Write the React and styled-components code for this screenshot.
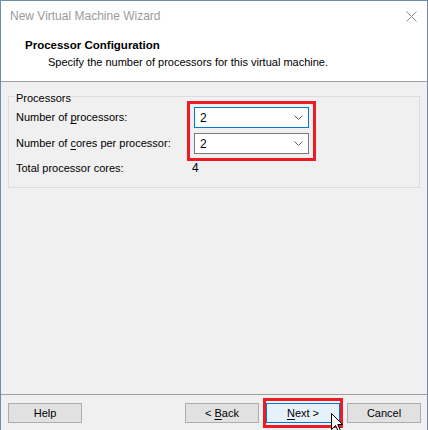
import styled, { createGlobalStyle } from 'styled-components';

const GlobalStyle = createGlobalStyle`
  html, body {
    margin: 0;
    padding: 0;
    background: #ffffff;
  }
  body {
    font-family: 'Liberation Sans', Arial, sans-serif;
    font-size: 11px;
    color: #000000;
  }
  * {
    box-sizing: border-box;
  }
`;

const Window = styled.div`
  position: relative;
  width: 428px;
  height: 430px;
  border: 1px solid #6c8db0;
  border-bottom: none;
  background: #f0f0f0;
  display: flex;
  flex-direction: column;
  overflow: hidden;
`;

const TitleBar = styled.div`
  height: 30px;
  background: #ffffff;
  display: flex;
  align-items: center;
  justify-content: space-between;
  padding: 0 10px 0 9px;
`;

const Title = styled.span`
  color: #9a9a9a;
  font-size: 12px;
`;

const Header = styled.div`
  height: 51px;
  background: #ffffff;
  border-bottom: 1px solid #a0a0a0;
  padding: 6px 0 0 24px;
`;

const HeaderTitle = styled.div`
  font-weight: bold;
  font-size: 11.5px;
  line-height: 16px;
`;

const HeaderText = styled.div`
  line-height: 16px;
  margin: 1px 0 0 23px;
`;

const Body = styled.div`
  flex: 1;
  padding: 7px 7px 0 7px;
`;

const Group = styled.fieldset`
  margin: 0;
  padding: 0 7px 10px 7px;
  border: 1px solid #dcdcdc;
`;

const Legend = styled.legend`
  padding: 4px 1px 0 1px;
  margin-left: -1px;
  line-height: 10px;
`;

const Grid = styled.div`
  display: grid;
  grid-template-columns: 178px 115px;
  grid-template-rows: 21px 21px 18px;
  row-gap: 5px;
  padding-top: 4px;
  align-items: center;
`;

const Label = styled.div`
  line-height: 15px;
`;

const Key = styled.span`
  text-decoration: underline;
  text-underline-offset: 2px;
`;

const Highlight = styled.div`
  position: relative;
  grid-column: 2;
  grid-row: 1 / span 2;
  display: flex;
  flex-direction: column;
  gap: 5px;
  align-self: stretch;

  &::after {
    content: '';
    position: absolute;
    top: -6px;
    left: -7px;
    right: -7px;
    bottom: -7px;
    border: 3px solid #ed1c24;
    pointer-events: none;
  }
`;

const Select = styled.div`
  height: 21px;
  background: #ffffff;
  border: 1px solid ${p => (p.$focused ? '#0078d7' : '#7a7a7a')};
  display: flex;
  align-items: center;
  justify-content: space-between;
  padding: 0 5px 0 5px;
  font-size: 12px;
`;

const Value = styled.div`
  margin-left: -2px;
  line-height: 15px;
  font-size: 12px;
`;

const Footer = styled.div`
  border-top: 1px solid #a0a0a0;
  height: 36px;
  padding: 8px 6px 0 7px;
  display: flex;
  gap: 7px;
`;

const Spacer = styled.div`
  flex: 1;
`;

const Button = styled.div`
  position: relative;
  width: 74px;
  height: 20px;
  display: flex;
  align-items: center;
  justify-content: center;
  white-space: pre;
  background: ${p => (p.$default ? '#e5f1fb' : '#e1e1e1')};
  border: 1px solid ${p => (p.$default ? '#0078d7' : '#adadad')};

  ${p =>
    p.$marked &&
    `
    &::after {
      content: '';
      position: absolute;
      top: -6px;
      left: -4px;
      right: -4px;
      bottom: -6px;
      border: 3px solid #ed1c24;
      pointer-events: none;
    }
  `}
`;

const Cursor = styled.svg`
  position: absolute;
  left: 330px;
  top: 412px;
`;

const Chevron = () => (
  <svg width="9" height="6" viewBox="0 0 9 6">
    <polyline points="0.5,0.5 4.5,4.5 8.5,0.5" fill="none" stroke="#606060" strokeWidth="1" />
  </svg>
);

const CloseIcon = () => (
  <svg width="11" height="11" viewBox="0 0 11 11">
    <path d="M0.5 0.5 L10.5 10.5 M10.5 0.5 L0.5 10.5" stroke="#8a8a8a" strokeWidth="1" />
  </svg>
);

export default function App() {
  return (
    <Window>
      <GlobalStyle />
      <TitleBar>
        <Title>New Virtual Machine Wizard</Title>
        <CloseIcon />
      </TitleBar>
      <Header>
        <HeaderTitle>Processor Configuration</HeaderTitle>
        <HeaderText>Specify the number of processors for this virtual machine.</HeaderText>
      </Header>
      <Body>
        <Group>
          <Legend>Processors</Legend>
          <Grid>
            <Label>
              Number of <Key>p</Key>rocessors:
            </Label>
            <Highlight>
              <Select $focused>
                2
                <Chevron />
              </Select>
              <Select>
                2
                <Chevron />
              </Select>
            </Highlight>
            <Label>
              Number of <Key>c</Key>ores per processor:
            </Label>
            <Label>Total processor cores:</Label>
            <Value>4</Value>
          </Grid>
        </Group>
      </Body>
      <Footer>
        <Button>Help</Button>
        <Spacer />
        <Button>
          {'< '}
          <Key>B</Key>
          {'ack'}
        </Button>
        <Button $default $marked>
          <Key>N</Key>
          {'ext >'}
        </Button>
        <Button>Cancel</Button>
      </Footer>
      <Cursor width="13" height="20" viewBox="0 0 13 20">
        <path
          d="M0.5 0.5 L0.5 16.5 L4.5 12.5 L7.5 18.5 L9.5 17.5 L6.8 11.5 L11.5 11.5 Z"
          fill="#ffffff"
          stroke="#000000"
          strokeWidth="1"
        />
      </Cursor>
    </Window>
  );
}
